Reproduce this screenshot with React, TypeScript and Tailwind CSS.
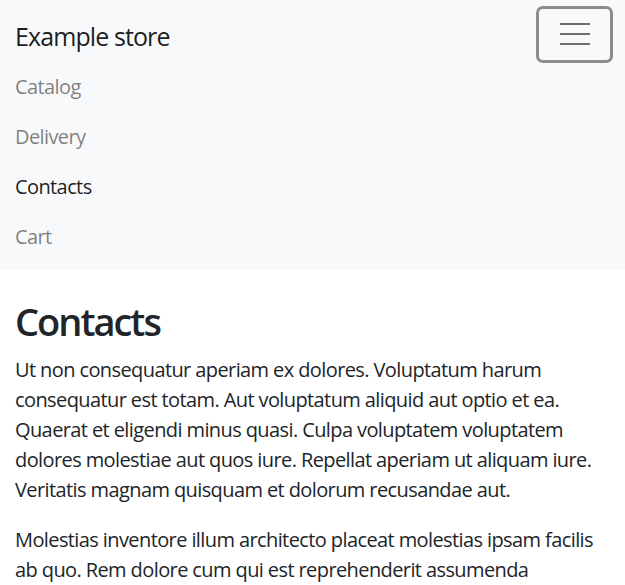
export default function App() {
  const links = [
    { label: "Catalog", active: false },
    { label: "Delivery", active: false },
    { label: "Contacts", active: true },
    { label: "Cart", active: false },
  ];

  return (
    <div className="min-h-[585px] bg-white text-[#212529] font-['Segoe_UI','Open_Sans',sans-serif]">
      {/* Navbar */}
      <nav className="bg-[#f8f9fa] px-[15px] pt-[6px] pb-[8px]">
        <div className="flex h-[56px] items-center justify-between">
          <a href="#" className="mt-[3px] text-[25px] leading-[30px] tracking-[-0.9px] text-black/90">
            Example store
          </a>
          <button className="mr-[-3px] flex h-[57px] w-[77px] items-center justify-center rounded-[7px] border-[3px] border-[#8c8c8c]">
            <svg width="30" height="24" viewBox="0 0 30 24">
              <path d="M0 2h30M0 12h30M0 22h30" stroke="#6f6f6f" strokeWidth="2" />
            </svg>
          </button>
        </div>
        <ul className="flex flex-col">
          {links.map(l => (
            <li key={l.label}>
              <a
                href="#"
                className={`block py-[10px] text-[20px] leading-[30px] tracking-[-0.6px] ${l.active ? "text-black/90" : "text-black/50"}`}
              >
                {l.label}
              </a>
            </li>
          ))}
        </ul>
      </nav>

      {/* Content */}
      <main className="px-[15px] pt-[27px] tracking-[-0.6px]">
        <h1 className="mb-[10px] text-[38px] font-semibold leading-[48px] tracking-[-2px]">Contacts</h1>
        <p className="mb-[20px] text-[20px] leading-[30px]">
          Ut non consequatur aperiam ex dolores. Voluptatum harum consequatur est totam. Aut voluptatum aliquid aut optio et ea. Quaerat et eligendi minus quasi. Culpa voluptatem voluptatem dolores molestiae aut quos iure. Repellat aperiam ut aliquam iure. Veritatis magnam quisquam et dolorum recusandae aut.
        </p>
        <p className="mb-[20px] text-[20px] leading-[30px]">
          Molestias inventore illum architecto placeat molestias ipsam facilis ab quo. Rem dolore cum qui est reprehenderit assumenda
        </p>
      </main>
    </div>
  );
}
